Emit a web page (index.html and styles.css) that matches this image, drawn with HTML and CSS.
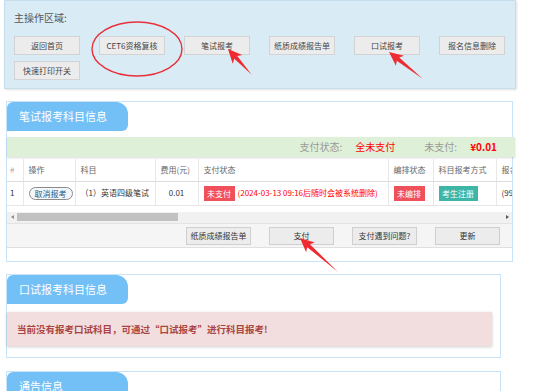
FILE: index.html
```html
<!DOCTYPE html>
<html lang="zh-CN">
<head>
    <meta charset="UTF-8">
    <meta name="viewport" content="width=device-width, initial-scale=1.0">
    <title>报名信息</title>
    <link rel="stylesheet" href="styles.css">
</head>
<body>
<div class="page">

    <div class="main-ops">
        <div class="ops-title">主操作区域:</div>
        <div class="ops-btns">
            <span class="btn">返回首页</span>
            <span class="btn">CET6资格复核</span>
            <span class="btn">笔试报考</span>
            <span class="btn">纸质成绩报告单</span>
            <span class="btn">口试报考</span>
            <span class="btn">报名信息删除</span>
            <span class="btn">快速打印开关</span>
        </div>
    </div>

    <div class="box box-written">
        <div class="box-tab">笔试报考科目信息</div>

        <div class="pay-bar">
            <span class="lbl">支付状态:</span>
            <span class="val">全未支付</span>
            <span class="lbl">未支付:</span>
            <span class="val money">¥0.01</span>
        </div>

        <div class="table-wrap">
            <table class="grid">
                <colgroup>
                    <col style="width:16px">
                    <col style="width:52px">
                    <col style="width:80px">
                    <col style="width:43px">
                    <col style="width:190px">
                    <col style="width:45px">
                    <col style="width:63px">
                    <col style="width:80px">
                </colgroup>
                <thead>
                    <tr>
                        <th class="num">#</th>
                        <th>操作</th>
                        <th>科目</th>
                        <th>费用(元)</th>
                        <th>支付状态</th>
                        <th>编排状态</th>
                        <th>科目报考方式</th>
                        <th>报名时间</th>
                    </tr>
                </thead>
                <tbody>
                    <tr>
                        <td class="num">1</td>
                        <td><span class="pill">取消报考</span></td>
                        <td>（1）英语四级笔试</td>
                        <td class="center">0.01</td>
                        <td><span class="badge badge-red">未支付</span><span class="warn">(2024-03-13 09:16后随时会被系统删除)</span></td>
                        <td><span class="badge badge-red">未编排</span></td>
                        <td><span class="badge badge-teal">考生注册</span></td>
                        <td>(99</td>
                    </tr>
                </tbody>
            </table>
        </div>

        <div class="scroll-bar">
            <span class="arr arr-l"></span>
            <span class="thumb"></span>
            <span class="arr arr-r"></span>
        </div>

        <div class="box-foot">
            <span class="btn btn-foot">纸质成绩报告单</span>
            <span class="btn btn-foot">支付</span>
            <span class="btn btn-foot">支付遇到问题?</span>
            <span class="btn btn-foot">更新</span>
        </div>
    </div>

    <div class="box box-oral">
        <div class="box-tab">口试报考科目信息</div>
        <div class="alert">当前没有报考口试科目，可通过“口试报考”进行科目报考!</div>
    </div>

    <div class="box box-notice">
        <div class="box-tab">通告信息</div>
    </div>

    <!-- annotation marks drawn over the page -->
    <svg class="marks" width="536" height="391" viewBox="0 0 536 391">
        <ellipse cx="137" cy="49" rx="45" ry="27" fill="none" stroke="#e8303a" stroke-width="1.4"/>
        <polygon fill="#ee2b30" transform="translate(228 49) rotate(47.3)" points="0,0 14,-6.5 11.5,-2 35,0 11.5,2 14,6.5"/>
        <polygon fill="#ee2b30" transform="translate(389 52) rotate(38.5)" points="0,0 14,-6.5 11.5,-2 43,0 11.5,2 14,6.5"/>
        <polygon fill="#ee2b30" transform="translate(300 238) rotate(41.8)" points="0,0 14,-6.5 11.5,-2 51,0 11.5,2 14,6.5"/>
    </svg>

</div>
</body>
</html>
```

FILE: styles.css
```css
*{
    box-sizing: border-box;
}

html{
    overflow: hidden;
}

body{
    margin: 0;
    font-family: "Noto Sans CJK SC", sans-serif;
    font-size: 8px;
    color: #333;
    background: #fff;
}

.page{
    position: relative;
    width: 536px;
    height: 391px;
}

/* top operation panel */
.main-ops{
    margin-left: 4px;
    width: 512px;
    height: 89px;
    background: #d9ebf5;
    border: 1px solid #c6deec;
    box-shadow: 1px 1px 2px rgba(0, 0, 0, 0.12);
    padding: 9px 0 0 9px;
}

.ops-title{
    font-size: 10px;
    line-height: 16px;
    color: #555;
}

.ops-btns{
    margin-top: 10px;
    width: 495px;
    display: flex;
    flex-wrap: wrap;
    gap: 6px 19px;
}

.btn{
    display: block;
    width: 66px;
    height: 19px;
    line-height: 17px;
    text-align: center;
    background: #ececec;
    border: 1px solid #d3d3d3;
    color: #444;
    font-size: 8px;
    white-space: nowrap;
}

/* section boxes */
.box{
    margin: 12px 0 0 6px;
    border: 1px solid #c8e3f7;
    background: #fff;
}

.box-written{
    width: 507px;
    height: 161px;
}

.box-oral{
    width: 495px;
    height: 84px;
}

.box-notice{
    margin-top: 13px;
    width: 495px;
    height: 60px;
}

.box-tab{
    width: 121px;
    height: 29px;
    line-height: 29px;
    padding-left: 12px;
    background: #72c0f6;
    color: #fff;
    font-size: 11px;
    border-radius: 6px 12px 6px 0;
}

.pay-bar{
    margin: 6px -3px 0 0;
    height: 20px;
    padding-right: 18px;
    background: #dff0d8;
    box-shadow: 0 1px 2px rgba(0, 0, 0, 0.15);
    display: flex;
    justify-content: flex-end;
    align-items: center;
    font-size: 10px;
    line-height: 20px;
}

.pay-bar .lbl{
    color: #999;
    margin-right: 13px;
}

.pay-bar .val{
    color: #f00;
    margin-right: 29px;
}

.pay-bar .money{
    margin-right: 0;
    font-weight: bold;
}

/* table */
.table-wrap{
    margin-top: 2px;
    width: 505px;
    overflow: hidden;
}

.grid{
    table-layout: fixed;
    border-collapse: collapse;
    width: 569px;
}

.grid th,
.grid td{
    padding: 0 5px;
    text-align: left;
    white-space: nowrap;
    overflow: hidden;
    vertical-align: middle;
    border-left: 1px solid #e8e8e8;
    font-size: 8px;
    line-height: 12px;
}

.grid th{
    height: 22px;
    font-weight: normal;
    color: #666;
    border-bottom: 1px solid #ddd;
}

.grid td{
    height: 24px;
    color: #333;
    border-bottom: 1px solid #e6e6e6;
}

.grid .num{
    border-left: none;
    padding: 0 3px;
}

.grid th.num{
    color: #aaa;
}

.grid .center{
    text-align: center;
}

.pill{
    display: inline-block;
    height: 13px;
    line-height: 11px;
    padding: 0 5px;
    border: 1px solid #8a8a8a;
    border-radius: 7px;
    background: #f3f6fa;
    color: #2b5a87;
}

.badge{
    display: inline-block;
    height: 15px;
    line-height: 15px;
    padding: 0 3.5px;
    color: #fff;
    vertical-align: middle;
}

.badge-red{
    background: #f0505a;
}

.badge-teal{
    background: #3db5a7;
}

.warn{
    margin-left: 3px;
    color: #f00;
    vertical-align: middle;
}

/* fake horizontal scrollbar */
.scroll-bar{
    margin-top: 6px;
    height: 11px;
    padding: 0 3px 0 4px;
    background: #f1f1f1;
    display: flex;
    align-items: center;
}

.arr{
    width: 0;
    height: 0;
    border-top: 2.5px solid transparent;
    border-bottom: 2.5px solid transparent;
}

.arr-l{
    border-right: 3px solid #8c8c8c;
}

.arr-r{
    margin-left: auto;
    border-left: 3px solid #555;
}

.thumb{
    margin-left: 3px;
    width: 161px;
    height: 8px;
    background: #c1c1c1;
}

.box-foot{
    height: 25px;
    padding: 3px 12px 0 0;
    background: #f5f5f5;
    border-top: 1px solid #e3e3e3;
    border-bottom: 1px solid #e0e0e0;
    display: flex;
    justify-content: flex-end;
    gap: 18px;
}

.btn-foot{
    width: 65px;
    height: 18px;
    line-height: 16px;
    border-color: #cfcfcf;
    color: #333;
}

.alert{
    margin: 8px 8px 0 0;
    height: 34px;
    line-height: 34px;
    padding-left: 10px;
    background: #f2dede;
    color: #a94442;
    font-size: 9.5px;
    font-weight: bold;
    box-shadow: 0 1px 3px rgba(0, 0, 0, 0.2);
}

.marks{
    position: absolute;
    top: 0;
    left: 0;
    pointer-events: none;
}
```
